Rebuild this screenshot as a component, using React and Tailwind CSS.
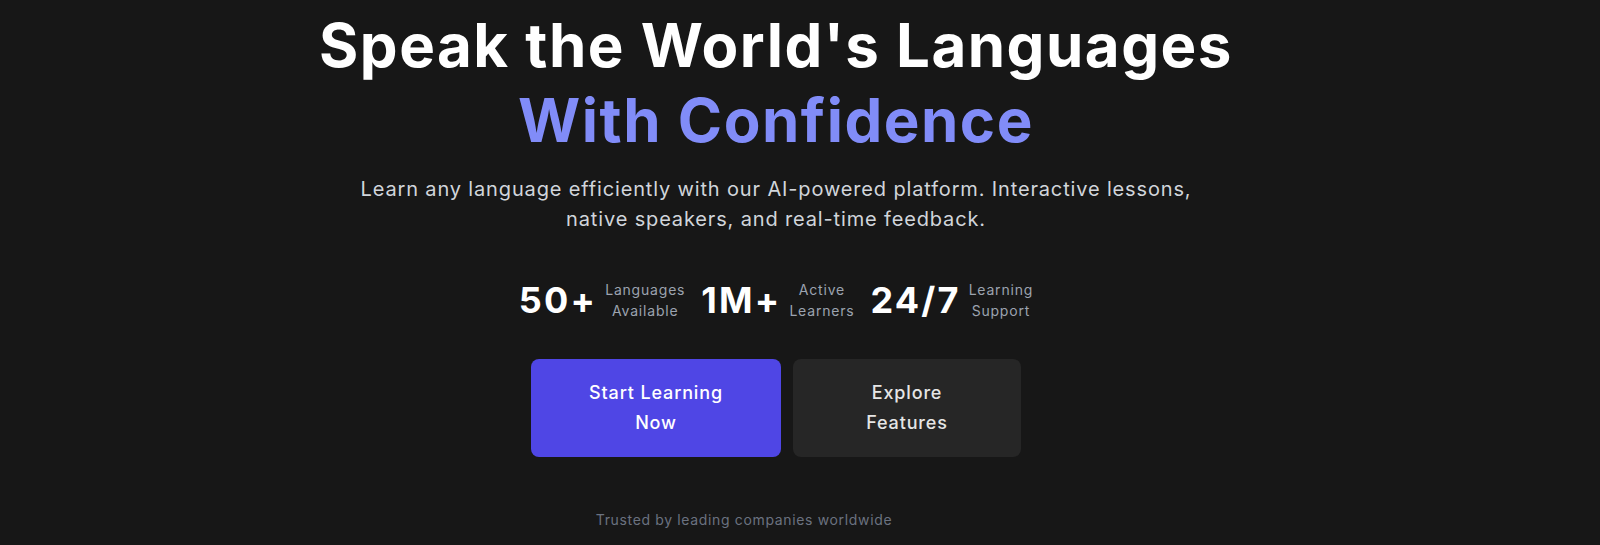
import React from "react";

const stats = [
  { value: "50+", label: ["Languages", "Available"] },
  { value: "1M+", label: ["Active", "Learners"] },
  { value: "24/7", label: ["Learning", "Support"] },
];

const Stat = ({ value, label }) => (
  <div className="flex items-center gap-2">
    <span className="text-4xl font-bold tracking-[2.2px] text-white">{value}</span>
    <span className="text-sm leading-[21px] tracking-[0.8px] text-[#9ca3af] text-center">
      {label[0]}
      <br />
      {label[1]}
    </span>
  </div>
);

export default function App() {
  return (
    <div
      className="min-h-[545px] bg-[#171717] pr-12 overflow-hidden"
      style={{ fontFamily: "Inter, 'Noto Sans', sans-serif" }}
    >
      <section className="flex flex-col items-center pt-2 text-center">
        <h1 className="text-6xl font-bold leading-[75px] tracking-[1.5px] text-white">
          Speak the World's Languages
          <br />
          <span className="text-[#818cf8]">With Confidence</span>
        </h1>

        <p className="mt-4 max-w-4xl text-xl leading-[30px] tracking-[0.85px] text-[#d1d5db]">
          Learn any language efficiently with our AI-powered platform.
          Interactive lessons, native speakers, and real-time feedback.
        </p>

        <div className="mt-[45px] flex items-center gap-4">
          {stats.map((s) => (
            <Stat key={s.value} value={s.value} label={s.label} />
          ))}
        </div>

        <div className="mt-[38px] flex gap-3">
          <button className="w-[250px] h-[98px] rounded-lg bg-[#4f46e5] text-lg font-medium leading-[30px] tracking-[0.85px] text-white">
            Start Learning
            <br />
            Now
          </button>
          <button className="w-[228px] h-[98px] rounded-lg bg-[#262626] text-lg font-medium leading-[30px] tracking-[0.85px] text-[#e5e5e5]">
            Explore
            <br />
            Features
          </button>
        </div>

        <div className="mt-[53px] pr-16 text-sm tracking-[0.65px] text-[#6b7280]">
          Trusted by leading companies worldwide
        </div>
      </section>
    </div>
  );
}
